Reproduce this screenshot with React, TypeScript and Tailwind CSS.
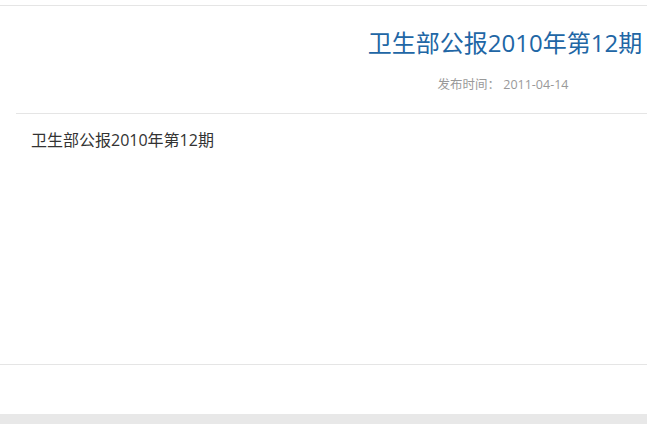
export default function App() {
  return (
    <div
      className="w-full h-[424px] overflow-hidden bg-white flex flex-col"
      style={{ fontFamily: '"Open Sans", "Noto Sans CJK SC", sans-serif' }}
    >
      <div className="mt-[5px] border-t border-[#e5e5e5]">
        <div className="ml-4 w-[974px] border-b border-[#e5e5e5]">
          <h1 className="pt-[21px] text-center text-[24px] leading-[32px] text-[#2166a5] font-normal translate-x-[2px]">
            卫生部公报2010年第12期
          </h1>
          <p className="mt-[17px] pb-[19px] text-center text-[12.5px] leading-[18px] text-[#999]">
            发布时间： 2011-04-14
          </p>
        </div>
        <div className="h-[250px] px-[31px] pt-[14px] text-[16px] leading-[24px] text-[#333]">
          卫生部公报2010年第12期
        </div>
      </div>
      <div className="border-t border-[#e5e5e5] h-[50px]" />
      <div className="flex-1 bg-[#e8e8e8]" />
    </div>
  );
}
